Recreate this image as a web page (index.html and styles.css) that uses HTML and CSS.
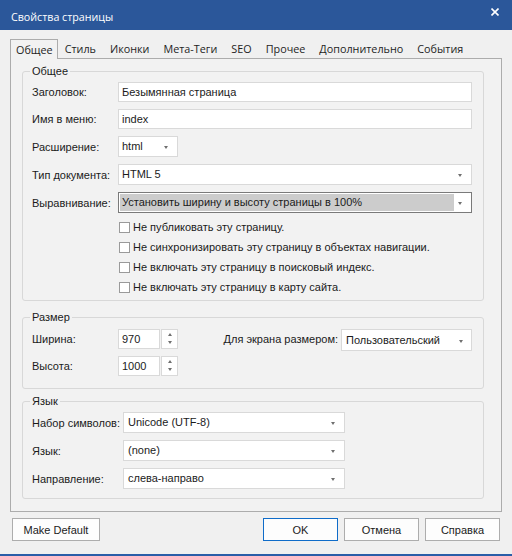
FILE: index.html
```html
<!DOCTYPE html>
<html lang="ru">
<head>
<meta charset="utf-8">
<title>Свойства страницы</title>
<link rel="stylesheet" href="styles.css">
</head>
<body>
<div class="window">
  <div class="titlebar">
    <span class="title">Свойства страницы</span>
    <svg class="close" width="8" height="8" viewBox="0 0 8 8"><path d="M0.5 0.5L7.5 7.5M7.5 0.5L0.5 7.5" stroke="#fff" stroke-width="1.6"/></svg>
  </div>

  <div class="tabs">
    <span class="tab active">Общее</span>
    <span class="tab">Стиль</span>
    <span class="tab">Иконки</span>
    <span class="tab">Мета-Теги</span>
    <span class="tab">SEO</span>
    <span class="tab">Прочее</span>
    <span class="tab">Дополнительно</span>
    <span class="tab">События</span>
  </div>

  <div class="panel">
    <div class="group group-general">
      <span class="legend">Общее</span>
      <div class="rows">
        <div class="row">
          <span class="lbl">Заголовок:</span>
          <div class="field wide">Безымянная страница</div>
        </div>
        <div class="row">
          <span class="lbl">Имя в меню:</span>
          <div class="field wide">index</div>
        </div>
        <div class="row row-combo">
          <span class="lbl">Расширение:</span>
          <div class="combo ext">html</div>
        </div>
        <div class="row row-combo">
          <span class="lbl">Тип документа:</span>
          <div class="combo wide">HTML 5</div>
        </div>
        <div class="row row-combo">
          <span class="lbl">Выравнивание:</span>
          <div class="combo wide focused"><span class="sel">Установить ширину и высоту страницы в 100%</span></div>
        </div>
      </div>
      <div class="checks">
        <div class="check"><span class="box"></span>Не публиковать эту страницу.</div>
        <div class="check"><span class="box"></span>Не синхронизировать эту страницу в объектах навигации.</div>
        <div class="check"><span class="box"></span>Не включать эту страницу в поисковый индекс.</div>
        <div class="check"><span class="box"></span>Не включать эту страницу в карту сайта.</div>
      </div>
    </div>

    <div class="group group-size">
      <span class="legend">Размер</span>
      <div class="rows">
        <div class="row">
          <span class="lbl">Ширина:</span>
          <div class="spinner"><div class="field num">970</div><div class="spin"><span class="up"></span><span class="down"></span></div></div>
          <div class="screen">
            <span class="lbl-inline">Для экрана размером:</span>
            <div class="combo screen-combo">Пользовательский</div>
          </div>
        </div>
        <div class="row">
          <span class="lbl">Высота:</span>
          <div class="spinner"><div class="field num">1000</div><div class="spin"><span class="up"></span><span class="down"></span></div></div>
        </div>
      </div>
    </div>

    <div class="group group-lang">
      <span class="legend">Язык</span>
      <div class="rows">
        <div class="row row-combo">
          <span class="lbl lbl-lang">Набор символов:</span>
          <div class="combo lang">Unicode (UTF-8)</div>
        </div>
        <div class="row row-combo">
          <span class="lbl lbl-lang">Язык:</span>
          <div class="combo lang">(none)</div>
        </div>
        <div class="row row-combo">
          <span class="lbl lbl-lang">Направление:</span>
          <div class="combo lang">слева-направо</div>
        </div>
      </div>
    </div>
  </div>

  <div class="buttons">
    <button class="btn btn-default">Make Default</button>
    <div class="btn-group">
      <button class="btn primary">OK</button>
      <button class="btn">Отмена</button>
      <button class="btn">Справка</button>
    </div>
  </div>
</div>
</body>
</html>
```
FILE: styles.css
```css
* { box-sizing: border-box; }
html, body { margin: 0; padding: 0; }
body {
  font-family: "Liberation Sans", Arial, sans-serif;
  font-size: 11px;
  color: #1b1b1b;
  background: #f0f0f0;
}
.window {
  width: 512px;
  height: 556px;
  background: #f0f0f0;
  border-bottom: 2px solid #2b5ea8;
  overflow: hidden;
}
.titlebar {
  height: 30px;
  background: #2b579a;
  display: flex;
  align-items: center;
  justify-content: space-between;
  padding: 0 13px 1px 11px;
}
.title {
  font-family: "Open Sans", sans-serif;
  font-size: 10.7px;
  color: #fff;
  padding-top: 4px;
}
.close { margin-top: -6px; }

/* tabs */
.tabs {
  display: flex;
  align-items: flex-end;
  height: 19px;
  margin: 9px 10px 0;
  font-family: "Open Sans", sans-serif;
  font-size: 10.8px;
  color: #1e1e1e;
}
.tab {
  height: 19px;
  line-height: 19px;
  padding: 0 7px;
  white-space: nowrap;
}
.tab.active {
  position: relative;
  z-index: 1;
  height: 20px;
  margin-bottom: -1px;
  padding: 0 4px 0 5px;
  line-height: 19px;
  border: 1px solid #acacac;
  border-bottom: none;
  background: #f2f2f2;
}

/* panel */
.panel {
  margin: 0 10px;
  height: 454px;
  border: 1px solid #acacac;
  background: #f2f2f2;
  padding: 12px 17px 13px 11px;
}
.group {
  position: relative;
  border: 1px solid #d8d8d8;
  border-radius: 3px;
  padding: 10px 11px 3px 9px;
}
.legend {
  position: absolute;
  top: -8px;
  left: 7px;
  line-height: 14px;
  padding: 0 2px;
  background: #f2f2f2;
}
.group-size { margin-top: 16px; padding-top: 11px; padding-bottom: 12px; }
.group-lang { margin-top: 12px; padding-top: 10px; padding-bottom: 9px; }

.rows { display: flex; flex-direction: column; gap: 7px; }
.row {
  display: flex;
  align-items: center;
  height: 20px;
}
.row-combo { height: 21px; }
.lbl { width: 86px; flex: none; white-space: nowrap; }
.lbl-lang { width: 91px; }

.field, .combo {
  height: 20px;
  line-height: 18px;
  background: #fff;
  border: 1px solid #d9d9d9;
  padding: 0 4px 0 3px;
  white-space: nowrap;
  overflow: hidden;
}
.wide { flex: 1; }
.combo {
  position: relative;
  height: 21px;
  line-height: 19px;
}
.combo::after {
  content: "";
  position: absolute;
  right: 9px;
  top: 9px;
  border-top: 3px solid #6f6f6f;
  border-left: 2.5px solid transparent;
  border-right: 2.5px solid transparent;
}
.ext { width: 60px; }
.focused {
  border-color: #7a7a7a;
  padding: 1px;
}
.sel {
  display: block;
  height: 17px;
  line-height: 17px;
  width: 334px;
  background: #cccccc;
  padding-left: 2px;
}

/* checkboxes */
.checks {
  margin: 4px 0 0 87px;
}
.check {
  height: 20px;
  display: flex;
  align-items: center;
  white-space: nowrap;
}
.box {
  width: 11px;
  height: 11px;
  border: 1px solid #9a9a9a;
  background: #fff;
  margin-right: 3px;
  flex: none;
}

/* spinners */
.spinner { display: flex; gap: 1px; height: 20px; }
.num { width: 42px; }
.spin {
  width: 17px;
  height: 20px;
  background: #fff;
  border: 1px solid #d9d9d9;
  display: flex;
  flex-direction: column;
  align-items: center;
  justify-content: space-between;
  padding: 3px 0 4px;
}
.up {
  border-bottom: 3px solid #6f6f6f;
  border-left: 2px solid transparent;
  border-right: 2px solid transparent;
}
.down {
  border-top: 3px solid #6f6f6f;
  border-left: 2px solid transparent;
  border-right: 2px solid transparent;
}
.screen {
  margin-left: auto;
  display: flex;
  align-items: flex-start;
  align-self: flex-start;
  gap: 3px;
  height: 20px;
}
.lbl-inline { line-height: 20px; white-space: nowrap; }
.screen-combo { width: 131px; height: 22px; line-height: 20px; padding-left: 4px; }
.screen-combo::after { top: 10px; right: 8px; }

.lang { width: 222px; padding-left: 4px; }

/* buttons */
.buttons {
  display: flex;
  justify-content: space-between;
  margin: 6px 12px 0;
}
.btn-group { display: flex; gap: 6px; }
.btn {
  height: 23px;
  width: 75px;
  font-family: "Liberation Sans", Arial, sans-serif;
  font-size: 11px;
  color: #1b1b1b;
  background: #fdfdfd;
  border: 1px solid #adadad;
  padding: 0;
  border-radius: 0;
}
.btn-default { width: 88px; }
.btn.primary { border-color: #0f6cc9; }
```
